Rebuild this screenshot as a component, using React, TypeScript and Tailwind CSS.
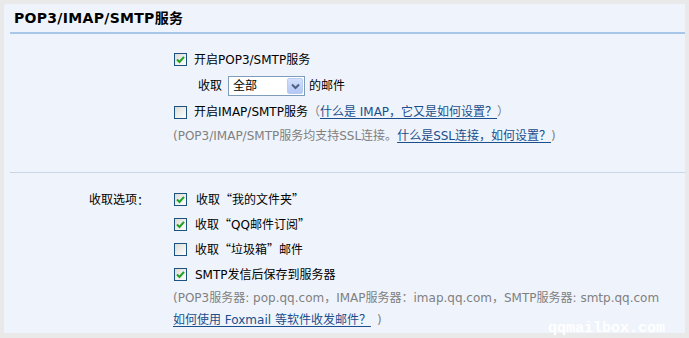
import React from "react";

const font = { fontFamily: '"DejaVu Sans", "Noto Sans CJK SC", sans-serif' };

function Check({ on }: { on?: boolean }) {
  return (
    <span className="flex h-[13px] w-[13px] shrink-0 items-center justify-center border border-[#1c5180] bg-gradient-to-br from-[#dcdcd6] to-white">
      {on && (
        <svg width="9" height="9" viewBox="0 0 9 9">
          <path d="M1 4.5 L3.5 7 L8 1.8" fill="none" stroke="#21a121" strokeWidth="2" />
        </svg>
      )}
    </span>
  );
}

function Link({ children }: { children: React.ReactNode }) {
  return <a className="text-[#1a4e8c] underline underline-offset-2">{children}</a>;
}

// full-width quote marks like the CJK font draws them
function Q({ children }: { children: React.ReactNode }) {
  return <span className="font-['Noto_Sans_CJK_SC']">{children}</span>;
}

export default function App() {
  return (
    <div className="relative h-[338px] w-[689px] overflow-hidden bg-[#e9e9e9] pl-[4px] pt-[4px]" style={font}>
      <div className="flex h-[329px] w-[681px] flex-col rounded-tl-[3px] bg-[#eff4fc] pl-[6px] text-[12px] text-black">
        <div className="flex h-[28px] items-center pl-[4px] text-[14px] font-bold tracking-[0.3px]">POP3/IMAP/SMTP服务</div>
        <div className="h-[2px] bg-[#a8c6e8]" />

        {/* section 1 */}
        <div className="flex pt-[13px] pb-[24px]">
          <div className="w-[164px] shrink-0" />
          <div className="flex flex-col">
            <div className="flex h-[25px] items-center">
              <Check on />
              <span className="ml-[7px]">开启POP3/SMTP服务</span>
            </div>
            <div className="flex h-[28px] items-center pl-[24px]">
              <span>收取</span>
              <span className="ml-[6px] flex h-[20px] w-[77px] items-center justify-between border border-[#7f9db9] bg-white pl-[4px] pr-[1px]">
                <span>全部</span>
                <span className="flex h-[16px] w-[16px] items-center justify-center rounded-[2px] border border-[#b8ccf4] bg-gradient-to-b from-[#d4e0fc] to-[#b3c7f4]">
                  <svg width="9" height="7" viewBox="0 0 9 7">
                    <path d="M1 1.5 L4.5 5 L8 1.5" fill="none" stroke="#4d6185" strokeWidth="2" />
                  </svg>
                </span>
              </span>
              <span className="ml-[4px]">的邮件</span>
            </div>
            <div className="flex h-[24px] items-center">
              <Check />
              <span className="ml-[7px]">开启IMAP/SMTP服务</span>
              <span className="text-[#808080]">（</span>
              <Link>什么是 IMAP，它又是如何设置？</Link>
              <span className="text-[#808080]">）</span>
            </div>
            <div className="flex h-[24px] items-center -ml-[1px] text-[#808080]">
              <span>(POP3/IMAP/SMTP服务均支持SSL连接。</span>
              <Link>什么是SSL连接，如何设置？</Link>
              <span>)</span>
            </div>
          </div>
        </div>
        <div className="h-[1px] bg-[#c6d6e6]" />

        {/* section 2 */}
        <div className="flex pt-[14px]">
          <div className="flex h-[25px] w-[164px] shrink-0 items-center justify-end pr-[25px]">
            收取选项<span className="font-['Noto_Sans_CJK_SC']">：</span>
          </div>
          <div className="flex flex-col">
            <div className="flex h-[25px] items-center">
              <Check on />
              <span className="ml-[9px]">
                收取<Q>“</Q>我的文件夹<Q>”</Q>
              </span>
            </div>
            <div className="flex h-[25px] items-center">
              <Check on />
              <span className="ml-[8px]">
                收取<Q>“</Q>QQ邮件订阅<Q>”</Q>
              </span>
            </div>
            <div className="flex h-[25px] items-center">
              <Check />
              <span className="ml-[8px]">
                收取<Q>“</Q>垃圾箱<Q>”</Q>邮件
              </span>
            </div>
            <div className="flex h-[25px] items-center">
              <Check on />
              <span className="ml-[8px]">SMTP发信后保存到服务器</span>
            </div>
            <div className="flex h-[21px] items-center -ml-[1px] whitespace-nowrap text-[#808080]">
              (POP3服务器: pop.qq.com，IMAP服务器：imap.qq.com，SMTP服务器: smtp.qq.com
            </div>
            <div className="flex h-[23px] items-center -ml-[1px] text-[#808080]">
              <Link>如何使用 Foxmail 等软件收发邮件？</Link>
              <span className="ml-[6px]">)</span>
            </div>
          </div>
        </div>
      </div>
      <span
        className="absolute left-[548px] top-[320px] text-[15px] font-bold leading-[18px] text-white"
        style={{ fontFamily: '"Liberation Mono", monospace' }}
      >
        qqmailbox.com
      </span>
    </div>
  );
}
